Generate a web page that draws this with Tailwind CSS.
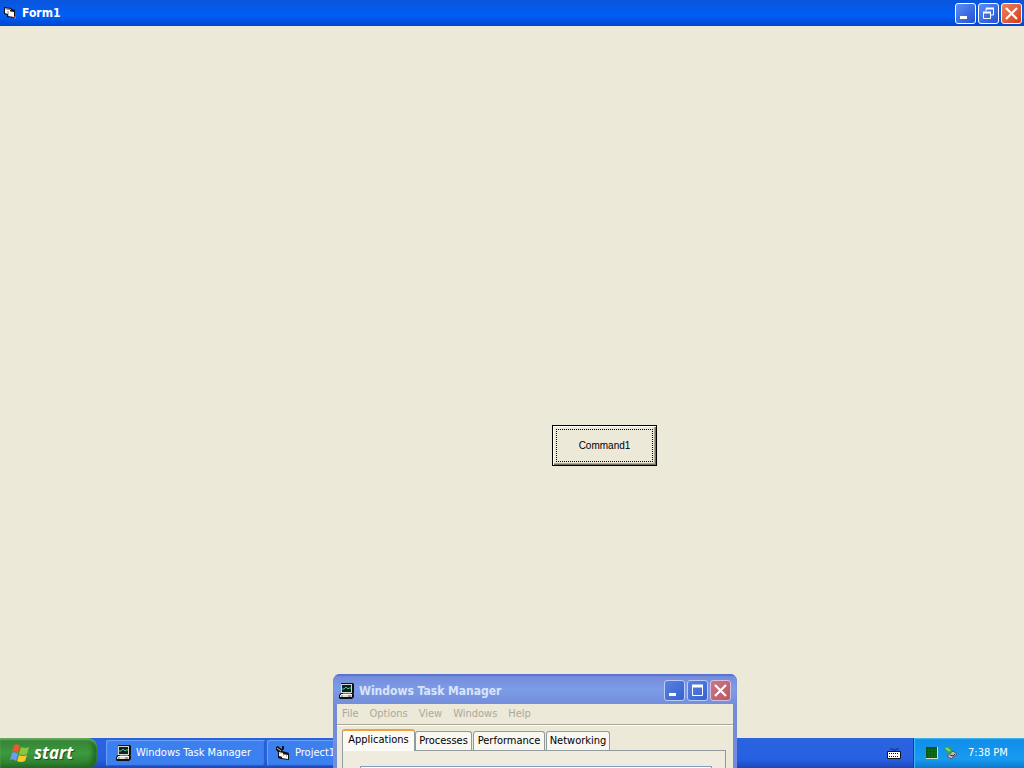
<!DOCTYPE html>
<html lang="en">
<head>
<meta charset="utf-8">
<meta name="viewport" content="width=device-width, initial-scale=1">
<title>Form1</title>
<script src="https://cdn.jsdelivr.net/npm/@tailwindcss/browser@4"></script>
</head>
<body class="bg-[#ece9d8]">
<svg class="hidden" aria-hidden="true">
  <symbol id="computer" viewBox="0 0 16 16">
    <path d="M2 0h12l1 1v9h-1l1 1v3l-2 2H1l-1-1v-3l2-2z" fill="#111"/>
    <path d="M2 1h11v9H2z" fill="#d6d6ce"/><path d="M3 2h9v7H3z" fill="#0a2420"/>
    <path d="M3 6h2l2-2 2 2 1-1h2" fill="none" stroke="#4fc38b"/>
    <path d="M4 10h8v1H4z" fill="#777"/><path d="M2 11h11v1H2z" fill="#fff"/><path d="M1 12h12v2H1z" fill="#deded6"/><path d="M9 13h3" stroke="#555"/><path d="M2 13h2" stroke="#37a04c"/>
  </symbol>
  <symbol id="close" viewBox="0 0 17 17"><path d="M3 3l11 11M14 3L3 14" stroke="#fff" stroke-width="2.2"/></symbol>
  <symbol id="minimize" viewBox="0 0 17 17"><path d="M3 11h7v3H3z" fill="#fff"/></symbol>
</svg>

<div class="relative flex min-h-screen flex-col overflow-hidden bg-[#ece9d8]">
  <header class="flex h-[26px] items-center bg-linear-to-b from-[#0a55dd] via-[#005ef5] via-60% to-[#0046d0] pr-0.5 pl-1">
    <svg class="h-3 w-3 shrink-0" viewBox="0 0 12 12" aria-hidden="true">
      <path d="M0 0l7 1 1 1 3 1v8l-8-1V8L0 7z" fill="#111"/><path d="M1 2l5 1v5L1 6z" fill="#fff"/><path d="M4 4l6 1v5l-6-1z" fill="#fff"/><path d="M4 4v5" stroke="#222" stroke-width=".6"/><path d="M1 1.500l6 1" stroke="#9aa9c8"/><path d="M10.500 9.500l1.500 2" stroke="#d45c38" stroke-width="2"/>
    </svg>
    <h1 class="ml-1.5 flex-1 font-['DejaVu_Sans_Condensed','DejaVu_Sans',sans-serif] text-[12px] leading-4 font-bold text-white">Form1</h1>
    <div class="flex gap-0.5">
      <button aria-label="Minimize" class="flex h-[21px] w-[21px] items-center justify-center rounded-[3px] border border-white bg-linear-to-br from-[#5d8df4] to-[#2250d4]"><svg class="h-[17px] w-[17px]"><use href="#minimize"/></svg></button>
      <button aria-label="Restore" class="flex h-[21px] w-[21px] items-center justify-center rounded-[3px] border border-white bg-linear-to-br from-[#5d8df4] to-[#2250d4]">
        <svg class="h-[17px] w-[17px]" viewBox="0 0 17 17" fill="none" stroke="#fff"><path d="M6 6V3.500h7.500V10H11"/><path d="M6 3.500h8" stroke-width="2"/><path d="M3.500 7.500h7v6h-7z"/><path d="M3 7.500h8" stroke-width="2"/></svg>
      </button>
      <button aria-label="Close" class="flex h-[21px] w-[21px] items-center justify-center rounded-[3px] border border-white bg-linear-to-br from-[#ee8060] to-[#d23a12]"><svg class="h-[17px] w-[17px]"><use href="#close"/></svg></button>
    </div>
  </header>

  <main class="relative flex-1">
    <button class="absolute top-[399px] left-[552px] h-[41px] w-[105px] border border-black bg-[#ece9d8] p-[3px] font-['Liberation_Sans',Arial,sans-serif] text-[10px] leading-4 text-black shadow-[inset_1px_1px_#fff,inset_-1px_-1px_#716f64,inset_-2px_-2px_#aca899]">
      <span class="flex h-full items-center justify-center border border-dotted border-black">Command1</span>
    </button>
  </main>

  <footer class="flex h-[30px] items-stretch bg-linear-to-b from-[#2a63dd] via-[#2860e4] via-70% to-[#1c49b8] font-['DejaVu_Sans_Condensed','DejaVu_Sans',sans-serif] text-[11px] text-white">
    <button class="flex w-[97px] items-center gap-1 rounded-r-[9px] bg-linear-to-b from-[#347f34] via-[#3d9a3e] via-50% to-[#2b792b] pl-2.5 shadow-[inset_0_2px_2px_#67ad62,inset_-4px_-2px_5px_#216623]">
      <svg class="h-5 w-5 shrink-0" viewBox="0 0 20 20" aria-hidden="true">
        <path d="M4 2q3-2 6 1L8 10Q5 7 2 9z" fill="#ed592c"/><path d="M11 4q4 2 8 0l-2 7q-4 2-8 0z" fill="#8cc63f"/><path d="M2 10q3-2 6 1l-2 7q-3-3-6-1z" fill="#6d9bf5"/><path d="M9 12q4 2 8 0l-2 6q-4 2-8 0z" fill="#f8c82c"/>
      </svg>
      <span class="font-['Open_Sans',sans-serif] text-[17px] leading-5 font-bold italic [text-shadow:1px_1px_1px_#184d18]">start</span>
    </button>
    <nav class="flex flex-1 gap-0.5 py-0.5 pl-[9px]" aria-label="Running programs">
      <button class="flex w-[159px] items-center gap-1 rounded-[2px] bg-[#3c80f0] pl-2.5 whitespace-nowrap shadow-[inset_1px_1px_1px_#6ca1f5,inset_-1px_-1px_1px_#245acb]"><svg class="h-4 w-4 shrink-0"><use href="#computer"/></svg>Windows Task Manager</button>
      <button class="flex w-[159px] items-center gap-1 rounded-[2px] bg-[#3c80f0] pl-2 whitespace-nowrap shadow-[inset_1px_1px_1px_#6ca1f5,inset_-1px_-1px_1px_#245acb]">
        <svg class="h-4 w-4 shrink-0" viewBox="0 0 16 16" aria-hidden="true"><path d="M1 2l2-1 2 2 2 1V1h2v3l-2 2 4 1 3 1v7l-8-1-3-1V7L1 5z" fill="#111"/><path d="M4 7l4 1v4l-4-1zM7 9l6 1v4l-6-1z" fill="#fff"/><path d="M2 3l4 3M4 8l3 1" stroke="#d5d1be"/><path d="M8 10h1M11 11h1" stroke="#777"/></svg>Project1
      </button>
    </nav>
    <div class="flex items-center pr-3">
      <svg class="mt-0.5 h-3.5 w-3.5" viewBox="0 0 14 14" role="img" aria-label="Keyboard"><path d="M3 2h3v1h3V2h3" fill="none" stroke="#173073"/><path d="M.5 4.500h13v7H.5z" fill="#fff" stroke="#111"/><path d="M2 6.500h10M2 9.500h10" stroke="#111" stroke-dasharray="1 1"/></svg>
    </div>
    <div class="flex w-[111px] items-center border-l border-[#123f91] bg-linear-to-b from-[#118cea] via-[#179bf0] via-70% to-[#0d78cf] pl-3 shadow-[inset_1px_1px_1px_#41b9f6]">
      <svg class="h-3 w-3" viewBox="0 0 12 12" role="img" aria-label="CPU usage"><path d="M0 0h12v12H0z" fill="#d4ddc7"/><path d="M0 0h11v11H0z" fill="#07540d"/><path d="M3 1v10M6 1v10M9 1v10M0 3h11M0 6h11M0 9h11" stroke="#198326" stroke-width=".6"/></svg>
      <svg class="ml-1.5 h-4 w-4" viewBox="0 0 16 16" role="img" aria-label="Safely remove hardware"><path d="M3 11l6-5 4 3-6 5z" fill="#bbb" stroke="#555"/><path d="M6 10l3 1 2-2" fill="none" stroke="#333"/><path d="M0 3l6-2 2 2v5l-6 1 1-2-2-2z" fill="#35a647"/><path d="M2 3l4 3" stroke="#8ed67c" stroke-width="2"/></svg>
      <time class="ml-2 whitespace-nowrap">7:38 PM</time>
    </div>
  </footer>

  <section aria-label="Windows Task Manager" class="absolute bottom-0 left-[333px] flex h-[94px] w-[404px] flex-col overflow-hidden rounded-t-[7px] bg-[#758bdc] px-1 font-['DejaVu_Sans_Condensed','DejaVu_Sans',sans-serif] text-[11px]">
    <header class="-mx-1 flex h-[30px] shrink-0 items-center bg-linear-to-b from-[#7489d8] via-[#7c9ce8] via-50% to-[#748edb] px-1.5 pt-[3px] shadow-[inset_0_2px_1px_#5873cd]">
      <svg class="h-4 w-4 shrink-0"><use href="#computer"/></svg>
      <h2 class="ml-1 flex-1 text-[12px] leading-4 font-bold whitespace-nowrap text-[#dae4fa]">Windows Task Manager</h2>
      <div class="flex gap-0.5">
        <button aria-label="Minimize" class="flex h-[21px] w-[21px] items-center justify-center rounded-[3px] border border-[#b8ccf5] bg-linear-to-br from-[#5c82e0] to-[#3560d0]"><svg class="h-[17px] w-[17px]"><use href="#minimize"/></svg></button>
        <button aria-label="Maximize" class="flex h-[21px] w-[21px] items-center justify-center rounded-[3px] border border-[#b8ccf5] bg-linear-to-br from-[#5c82e0] to-[#3560d0]"><svg class="h-[17px] w-[17px]" viewBox="0 0 17 17"><path d="M3.500 4.500h10v9h-10z" fill="none" stroke="#fff"/><path d="M3 4h11" stroke="#fff" stroke-width="3"/></svg></button>
        <button aria-label="Close" class="flex h-[21px] w-[21px] items-center justify-center rounded-[3px] border border-[#d5bfdc] bg-linear-to-br from-[#c57888] to-[#b95762]"><svg class="h-[17px] w-[17px]"><use href="#close"/></svg></button>
      </div>
    </header>
    <div class="flex flex-1 flex-col bg-[#ece9d8]">
      <nav class="flex h-[21px] shrink-0 gap-[11px] border-b border-[#aca899] pl-[5px] leading-[18px] text-[#aca899] shadow-[0_1px_#fff]">
        <button>File</button><button>Options</button><button>View</button><button>Windows</button><button>Help</button>
      </nav>
      <div role="tablist" class="relative mt-1 flex h-[21px] items-end pl-[5px] leading-4 text-black">
        <button role="tab" aria-selected="true" class="z-10 -mb-px h-[22px] w-[73px] rounded-t-[3px] border border-t-2 border-b-0 border-[#919b9c] border-t-[#f3a03a] bg-[#fbfaf7] pb-0.5">Applications</button>
        <button role="tab" aria-selected="false" class="h-[19px] w-[57px] rounded-t-[3px] border border-b-0 border-[#919b9c] bg-[#f8f7f1]">Processes</button>
        <button role="tab" aria-selected="false" class="ml-px h-[19px] w-[72px] rounded-t-[3px] border border-b-0 border-[#919b9c] bg-[#f8f7f1]">Performance</button>
        <button role="tab" aria-selected="false" class="ml-px h-[19px] w-[64px] rounded-t-[3px] border border-b-0 border-[#919b9c] bg-[#f8f7f1]">Networking</button>
      </div>
      <div role="tabpanel" class="mr-[7px] ml-[5px] flex-1 border border-b-0 border-[#919b9c] bg-[#f0ebdf] pt-[15px] pr-[13px] pl-[17px]">
        <div class="h-2 border border-b-0 border-[#7f9db9] bg-white"></div>
      </div>
    </div>
  </section>
</div>
</body>
</html>
